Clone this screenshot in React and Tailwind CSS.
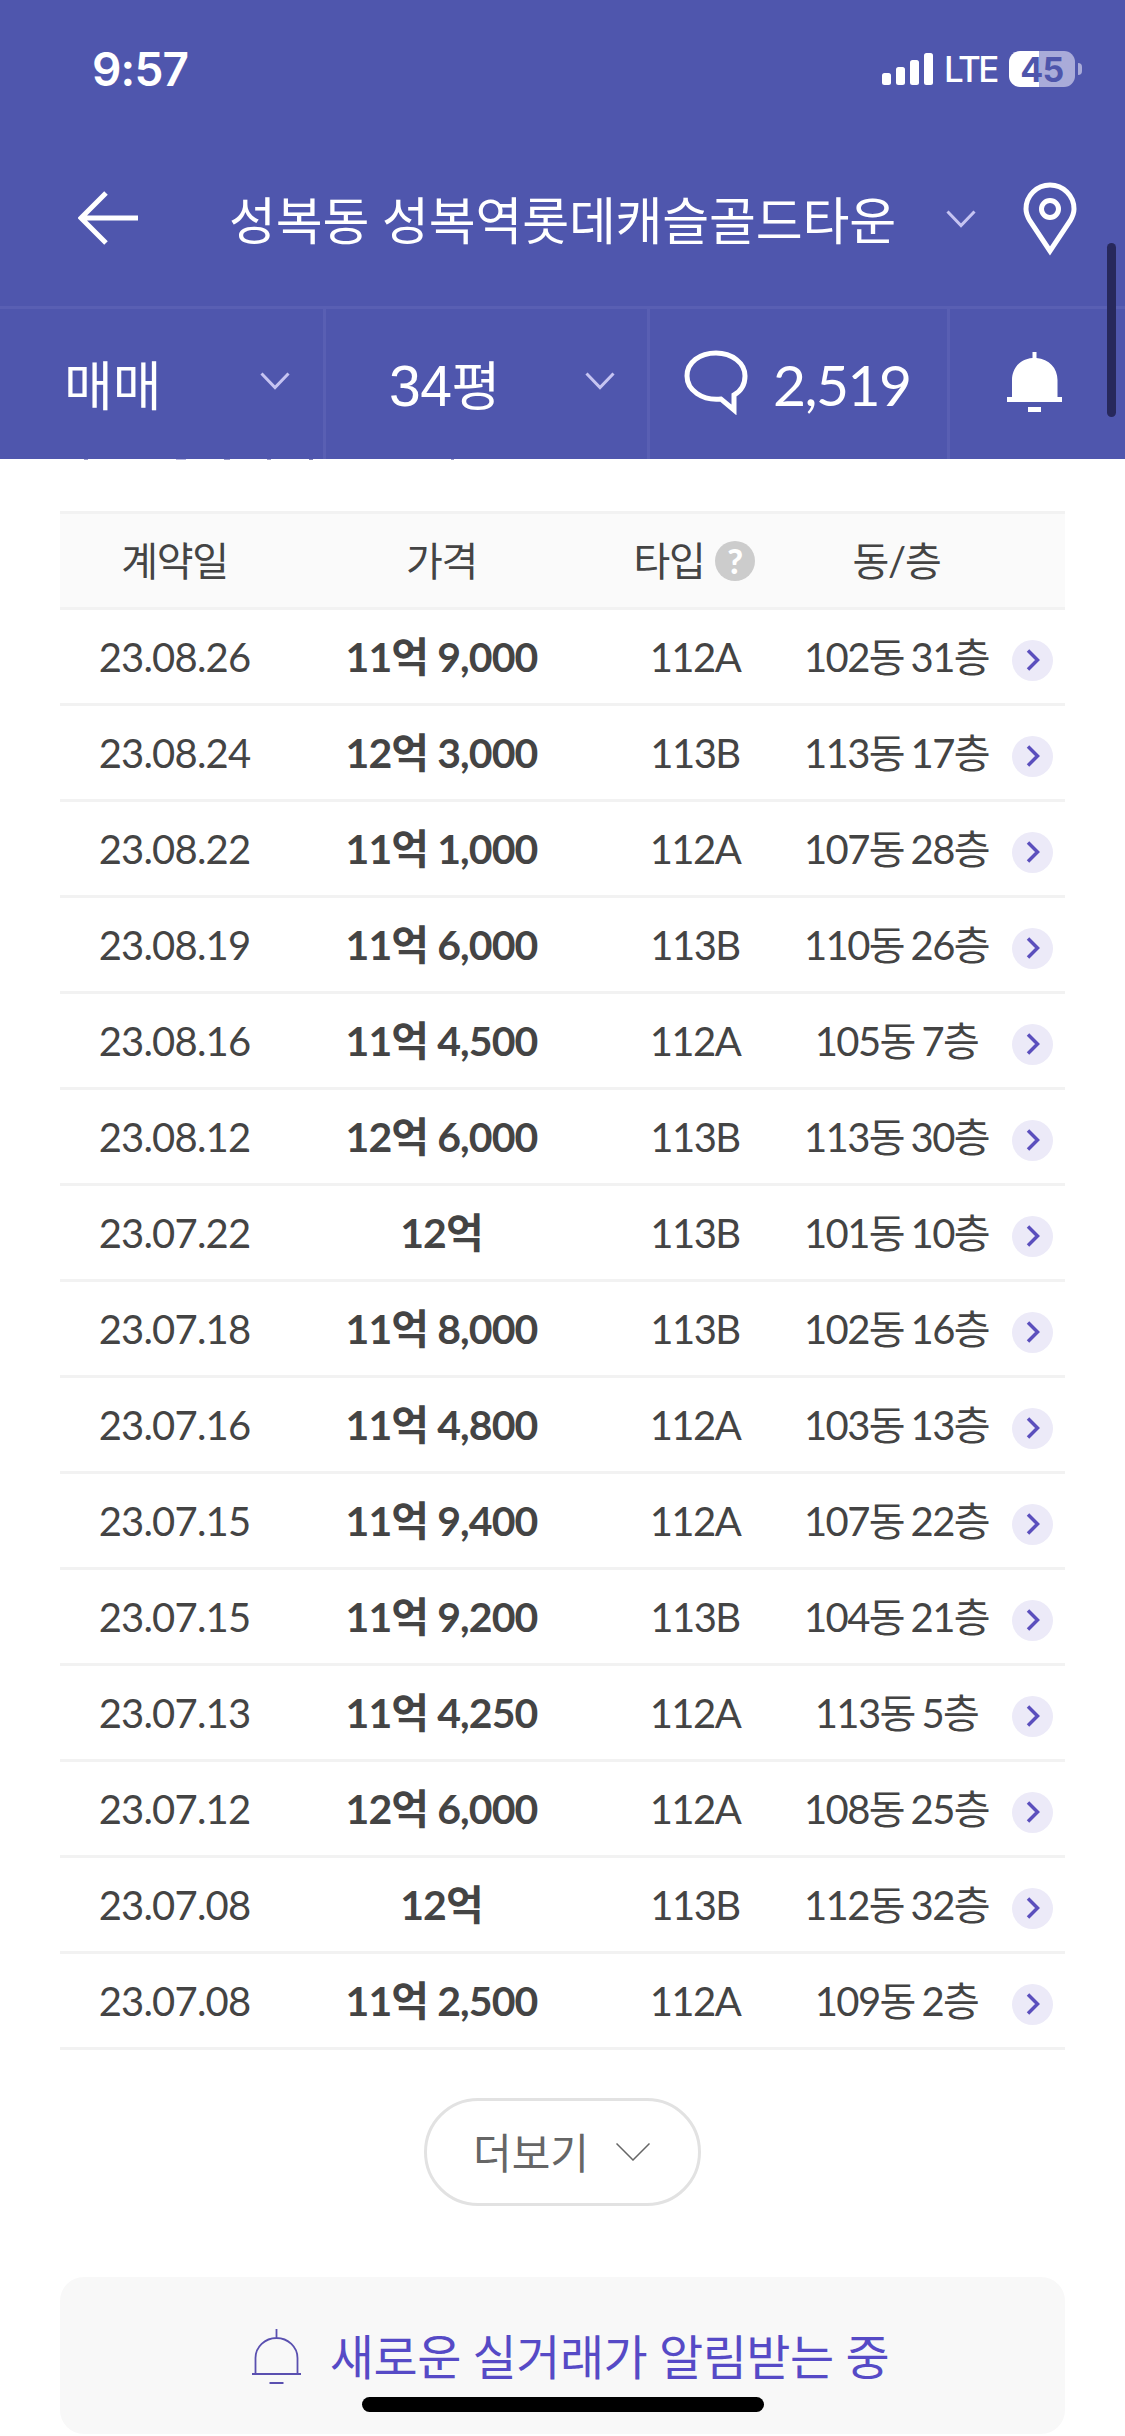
import React from 'react';

const deals = [
  { date: '23.08.26', price: '11억 9,000', type: '112A', unit: '102동 31층' },
  { date: '23.08.24', price: '12억 3,000', type: '113B', unit: '113동 17층' },
  { date: '23.08.22', price: '11억 1,000', type: '112A', unit: '107동 28층' },
  { date: '23.08.19', price: '11억 6,000', type: '113B', unit: '110동 26층' },
  { date: '23.08.16', price: '11억 4,500', type: '112A', unit: '105동 7층' },
  { date: '23.08.12', price: '12억 6,000', type: '113B', unit: '113동 30층' },
  { date: '23.07.22', price: '12억', type: '113B', unit: '101동 10층' },
  { date: '23.07.18', price: '11억 8,000', type: '113B', unit: '102동 16층' },
  { date: '23.07.16', price: '11억 4,800', type: '112A', unit: '103동 13층' },
  { date: '23.07.15', price: '11억 9,400', type: '112A', unit: '107동 22층' },
  { date: '23.07.15', price: '11억 9,200', type: '113B', unit: '104동 21층' },
  { date: '23.07.13', price: '11억 4,250', type: '112A', unit: '113동 5층' },
  { date: '23.07.12', price: '12억 6,000', type: '112A', unit: '108동 25층' },
  { date: '23.07.08', price: '12억', type: '113B', unit: '112동 32층' },
  { date: '23.07.08', price: '11억 2,500', type: '112A', unit: '109동 2층' },
];

const ChevronDown = () => (
  <svg width="30" height="18" viewBox="0 0 30 18" fill="none" stroke="#c6c4f2" strokeWidth="3" className="shrink-0">
    <path d="M1.5 1.5 15 15.5 28.500 1.5" />
  </svg>
);

const StatusBar = () => (
  <div className="flex h-[138px] pl-[92px] pr-[43px] pt-[51px] font-['Inter',sans-serif]">
    <div className="text-[46px] leading-[37px] font-semibold tracking-[-0.8px]">9:57</div>
    <div className="ml-auto flex h-[36px] items-center">
      <svg width="51" height="32" viewBox="0 0 51 32" fill="#fff">
        <rect x="0" y="20" width="9" height="12" rx="2.500" />
        <rect x="14" y="14" width="9" height="18" rx="2.500" />
        <rect x="28" y="7" width="9" height="25" rx="2.500" />
        <rect x="42" y="0" width="9" height="32" rx="2.500" />
      </svg>
      <span className="ml-[11px] w-[65px] text-[35px] leading-[36px] font-medium tracking-[-2.6px]">LTE</span>
      <div className="flex h-[36px] w-[66px] items-center justify-center rounded-[11px] bg-linear-to-r from-white from-[46%] to-[#a9abd9] to-[46%] text-[34px] font-bold tracking-[-0.5px] text-[#4e55ab]">
        45
      </div>
      <div className="ml-[3px] h-[12px] w-[4px] rounded-r-full bg-[#a9abd9]" />
    </div>
  </div>
);

const Header = () => (
  <header className="h-[459px] bg-[#4f56ad] text-white">
    <StatusBar />
    <div className="flex h-[168px] items-center pb-[6px] pl-[78px]">
      <svg width="60" height="54" viewBox="0 0 60 54" fill="none" stroke="#fff" strokeWidth="5" className="mb-[2px]">
        <path d="M28 2 3 27 28 52M3 27H60" />
      </svg>
      <h1 className="mt-[3px] ml-[91px] w-[717px] text-[51px] leading-[60px] font-normal tracking-[-0.2px] whitespace-nowrap">성복동 성복역롯데캐슬골드타운</h1>
      <ChevronDown />
      <svg width="54" height="74" viewBox="0 0 54 74" fill="none" stroke="#fff" strokeWidth="5" className="ml-[47px]">
        <path d="M27 69 7 39C4 34 3 31 3 27a24 24 0 0 1 48 0c0 4-1 7-4 12Z" />
        <circle cx="27" cy="27" r="8.500" />
      </svg>
    </div>
    <div className="flex h-[153px] border-t-[3px] border-[#595fb3]">
      <div className="flex w-[326px] items-center border-r-[3px] border-[#595fb3] pr-[33px] pl-[64px] text-[53px]">
        <span className="mt-[4px] leading-[60px]">매매</span>
        <span className="mb-[6px] ml-auto"><ChevronDown /></span>
      </div>
      <div className="flex w-[324px] items-center border-r-[3px] border-[#595fb3] pr-[32px] pl-[63px] text-[53px]">
        <span className="mt-[4px] flex items-baseline leading-[60px]">
          <span className="font-['Liberation_Sans',sans-serif] text-[57px] tracking-[-0.5px]">34</span>평
        </span>
        <span className="mb-[6px] ml-auto"><ChevronDown /></span>
      </div>
      <div className="flex w-[300px] items-center border-r-[3px] border-[#595fb3] pl-[33px]">
        <svg width="66" height="68" viewBox="0 0 66 68" fill="none" stroke="#fff" strokeWidth="5" className="mb-[6px]">
          <path d="M38 52C19 54 4 43 4 29S17 6 33 6s29 10 29 23c0 8-4 15-11 19V63Z" />
        </svg>
        <span className="ml-[24px] text-[57px] leading-[60px] tracking-[-1.5px]">2,519</span>
      </div>
      <div className="flex items-center pb-[3px] pl-[57px]">
        <svg width="56" height="62" viewBox="0 0 56 62" fill="#fff">
          <path d="M25.500 0h4v6C42 7 50.500 16 50.500 28v17H55v5H0v-5h5V28C5 16 13 7 25.500 6Z" />
          <rect x="21" y="55" width="13" height="5" />
        </svg>
      </div>
    </div>
  </header>
);

const grid = 'grid grid-cols-[229px_305px_202px_201px_68px] items-center text-center';

const DealTable = () => (
  <div className="mx-[60px] mt-[52px] text-[40px] tracking-[-1.3px] text-[#444] whitespace-nowrap">
    <div className={`${grid} h-[99px] border-y-[3px] border-[#f2f2f2] bg-[#fafafa]`}>
      <div>계약일</div>
      <div>가격</div>
      <div className="flex items-center justify-center gap-[10px] pr-[2px]">
        타입
        <span className="flex size-[40px] items-center justify-center rounded-full bg-[#ccc] text-[34px] font-black text-white">?</span>
      </div>
      <div>동/층</div>
    </div>
    {deals.map((deal, idx) => (
      <div key={idx} className={`${grid} h-[96px] border-b-[3px] border-[#f2f2f2] pt-[1px]`}>
        <div className="tracking-[-0.8px]">{deal.date}</div>
        <div className="text-[41px] font-bold tracking-[-0.9px]">{deal.price}</div>
        <div className="tracking-[-1.5px]">{deal.type}</div>
        <div className="tracking-[-1.6px] [word-spacing:-2px]">{deal.unit}</div>
        <div className="mt-[6px] ml-[3px] flex size-[41px] items-center justify-center justify-self-center rounded-full bg-[#eceaf8]">
          <svg width="14" height="22" viewBox="0 0 14 22" fill="none" stroke="#5b4fbd" strokeWidth="3.500">
            <path d="M2 1.500 11.500 11 2 20.500" />
          </svg>
        </div>
      </div>
    ))}
  </div>
);

const App = () => {
  return (
    <div className="relative h-[2436px] w-[1125px] overflow-hidden bg-white font-['Lato','Noto_Sans_CJK_KR',sans-serif]">
      <Header />
      <DealTable />

      <button className="mx-auto mt-[48px] flex h-[108px] w-[277px] items-center justify-center gap-[27px] rounded-full border-[3px] border-[#e2e2e2] pr-[2px] text-[42px] text-[#666]">
        <span className="mt-[2px]">더보기</span>
        <svg width="34" height="18" viewBox="0 0 34 18" fill="none" stroke="#666" strokeWidth="1.500">
          <path d="M.5.5 17 17 33.500.5" />
        </svg>
      </button>

      <div className="mx-[60px] mt-[71px] flex h-[157px] items-center justify-center gap-[29px] rounded-[24px] bg-[#f8f8f8] pt-[3px] pl-[16px] text-[48px] tracking-[-0.5px] text-[#564ac6]">
        <svg width="49" height="56" viewBox="0 0 49 56" fill="none" stroke="#5a50b0" strokeWidth="1.800">
          <path d="M24.500 0v9M3.500 45V29a21 20 0 0 1 42 0v16M0 45h49M17.500 54h14" />
        </svg>
        <span>새로운 실거래가 알림받는 중</span>
      </div>

      {/* scroll bar + home indicator */}
      <div className="absolute top-[243px] right-[9px] h-[174px] w-[9px] rounded-full bg-[#27285c]" />
      <div className="absolute bottom-[24px] left-[362px] h-[15px] w-[402px] rounded-full bg-black" />

      {/* caption scrolled under the header, only its lower edge shows */}
      <div className="absolute top-[459px] left-[84px] flex h-[1px] w-[370px] justify-between">
        <span className="w-[4px] bg-[#9a9bc8]" />
        <span className="ml-[50px] w-[10px] bg-[#b5b5dd]" />
        <span className="w-[6px] bg-[#9a9bc8]" />
        <span className="w-[4px] bg-[#9a9bc8]" />
        <span className="mr-[100px] w-[4px] bg-[#8384b4]" />
        <span className="w-[3px] bg-[#9a9bc8]" />
      </div>
    </div>
  );
};

export default App;
